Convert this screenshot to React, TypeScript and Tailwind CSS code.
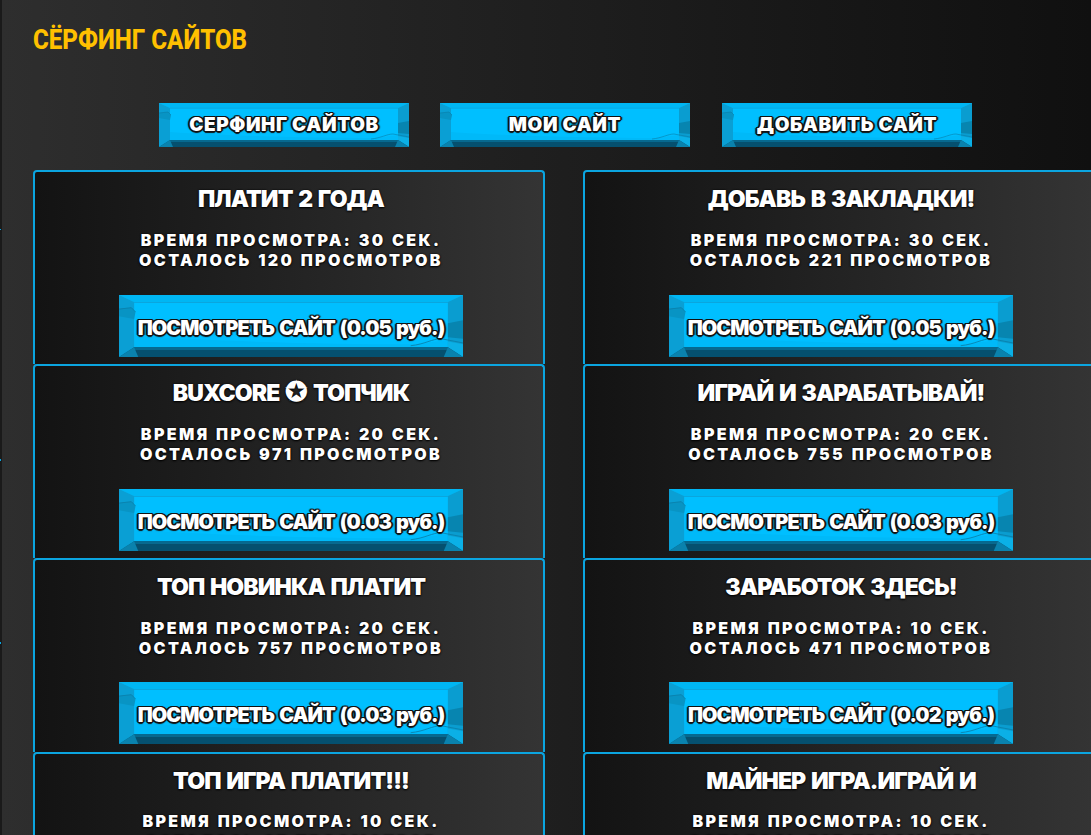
const cards = [
  { title: <>ПЛАТИТ 2 ГОДА</>, sec: 30, left: 120, price: "0.05" },
  { title: <>ДОБАВЬ В ЗАКЛАДКИ!</>, sec: 30, left: 221, price: "0.05" },
  { title: <>BUXCORE <span className="text-[27px] leading-[20px]">✪</span> ТОПЧИК</>, sec: 20, left: 971, price: "0.03" },
  { title: <>ИГРАЙ И ЗАРАБАТЫВАЙ!</>, sec: 20, left: 755, price: "0.03" },
  { title: <>ТОП НОВИНКА ПЛАТИТ</>, sec: 20, left: 757, price: "0.03" },
  { title: <>ЗАРАБОТОК ЗДЕСЬ!</>, sec: 10, left: 471, price: "0.02" },
  { title: <>ТОП ИГРА ПЛАТИТ!!!</>, sec: 10, left: 37, price: "0.02" },
  { title: <>МАЙНЕР ИГРА.ИГРАЙ И</>, sec: 10, left: 527, price: "0.02" },
];

function BlueButton({ className, textClass, children }: { className: string; textClass: string; children: React.ReactNode }) {
  return (
    <div className={"relative flex items-center justify-center " + className}>
      <svg className="absolute inset-0 w-full h-full" viewBox="0 0 250 44" preserveAspectRatio="none">
        <rect width="250" height="44" fill="#00bfff" />
        {/* top band */}
        <polygon points="0,0 250,0 239,5 11,5" fill="#00b6f3" />
        <path d="M11 5.3 H239" stroke="#0aa6de" strokeWidth="0.8" />
        {/* soft wave low in the face */}
        <path d="M11 29 C70 33 150 35 215 35 L239 32 V37 H11 Z" fill="#00b9f8" />
        {/* side bevels */}
        <polygon points="0,0 11,5 11,37 0,44" fill="#0a9fd4" />
        <polygon points="250,0 239,5 239,37 250,44" fill="#0a9dd0" />
        <polygon points="239,20 250,18 250,31 239,30" fill="#0785b0" />
        <polygon points="239,33 250,35 250,44 239,37" fill="#0bb0e6" />
        <polygon points="0,10 9,9 12,12 11,17 0,15" fill="#0894c4" />
        {/* bottom band */}
        <polygon points="11,37 239,37 250,44 0,44" fill="#05506f" />
        <polygon points="11,37 239,37 241,39 9,39" fill="#07698f" />
        <polygon points="0,44 11,37 14,44" fill="#0a82ad" />
        <polygon points="250,44 239,37 236,44" fill="#0a82ad" />
        {/* cracks */}
        <path d="M0 10 L9 9 L12 12" fill="none" stroke="#0a7ea8" strokeWidth="0.6" />
        <path d="M212 36 C222 35 228 31 234 31 L250 34" fill="none" stroke="#0a7ea8" strokeWidth="0.6" />
      </svg>
      <span className={"relative text-white font-black whitespace-nowrap font-['Inter',sans-serif] [text-shadow:-1px_-1px_0_#111,1px_-1px_0_#111,-1px_1px_0_#111,1px_1px_0_#111,0_-1px_0_#111,0_2px_1px_#111,-2px_0_1px_#111,2px_0_1px_#111] " + textClass}>
        {children}
      </span>
    </div>
  );
}

function Card({ title, sec, left, price }: { title: React.ReactNode; sec: number; left: number; price: string }) {
  return (
    <div className="w-[512px] h-[193.75px] shrink-0 border-2 border-b-0 border-[#0ba5e0] rounded-t-[4px] bg-gradient-to-r from-[#131313] to-[#343434] flex flex-col items-center pl-[4px] font-['Inter',sans-serif] text-white">
      <div className="mt-[12.9px] h-[28px] leading-[28px] text-[23px] font-black tracking-[-0.9px] [word-spacing:2px] whitespace-nowrap [text-shadow:0_1px_2px_#000,0_0_2px_#000]">{title}</div>
      <div className="mt-[16.9px] text-[16px] leading-[20px] font-black tracking-[2.35px] [word-spacing:1px] text-center whitespace-nowrap [text-shadow:0_1px_2px_#000,0_0_2px_#000]">
        <div>ВРЕМЯ ПРОСМОТРА: {sec} СЕК.</div>
        <div>ОСТАЛОСЬ {left} ПРОСМОТРОВ</div>
      </div>
      <BlueButton className="mt-[24.65px] w-[344px] h-[62px] shrink-0 pt-[4px]" textClass="text-[20px] tracking-[-0.93px] [word-spacing:2px]">
        ПОСМОТРЕТЬ САЙТ ({price} руб.)
      </BlueButton>
    </div>
  );
}

export default function App() {
  return (
    <div className="flex h-[835px] w-[1091px] overflow-hidden bg-[#111]">
      <aside className="relative w-[2px] shrink-0 bg-[#1a1a1a]">
        <div className="absolute left-0 top-[229px] h-px w-px bg-[#0ba5e0]" />
        <div className="absolute left-0 top-[459px] h-[2px] w-px bg-[#0ba5e0]" />
        <div className="absolute left-0 top-[642px] h-[2px] w-px bg-[#0ba5e0]" />
      </aside>
      <main className="h-full w-[1089px] shrink-0 bg-gradient-to-r from-[#2e2e2e] to-[#101010] pl-[31px]">
        <h1 className="pt-[25px] h-[103px] text-[28px] leading-[30px] font-extrabold text-[#ffc000] font-['Roboto',sans-serif] whitespace-nowrap">
          <span className="inline-block origin-left scale-x-[0.862]">СЁРФИНГ САЙТОВ</span>
        </h1>
        <div className="flex gap-[31px] pl-[126px]">
          <BlueButton className="w-[250px] h-[44px]" textClass="text-[19px] tracking-[0.6px]">СЕРФИНГ САЙТОВ</BlueButton>
          <BlueButton className="w-[250px] h-[44px]" textClass="text-[19px] tracking-[0.6px]">МОИ САЙТ</BlueButton>
          <BlueButton className="ml-px w-[250px] h-[44px]" textClass="text-[19px] tracking-[0.6px]">ДОБАВИТЬ САЙТ</BlueButton>
        </div>
        <div className="mt-[23.4px] grid grid-cols-[512px_512px] gap-x-[38px]">
          {cards.map((c, i) => (
            <Card key={i} {...c} />
          ))}
        </div>
      </main>
    </div>
  );
}
